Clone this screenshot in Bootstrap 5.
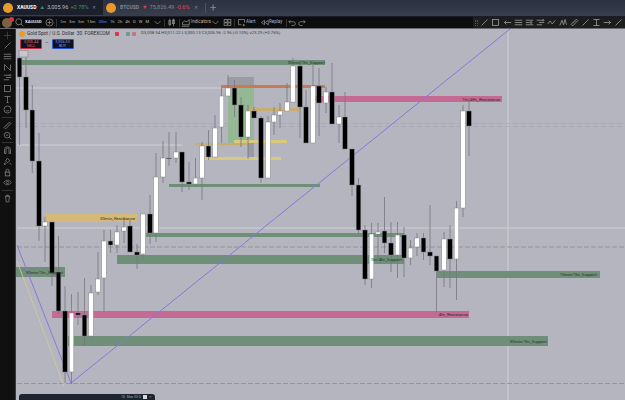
<!DOCTYPE html>
<html>
  <head>
    <title>XAUUSD chart</title>
    <link href="https://cdn.jsdelivr.net/npm/bootstrap@5.3.3/dist/css/bootstrap.min.css" rel="stylesheet">
    <style>
      html, body { height: 100%; overflow: hidden; }
      body { background: #b4b5bf; font-family: Roboto, "Liberation Sans", sans-serif; font-size: 4.500px; color: #b4b6bd; }
      .page { height: 400px; width: 625px; }
      .tabbar { height: 16px; background: linear-gradient(#2c3140, #383e4d); font-size: 5.600px; }
      .tab { height: 15px; padding-left: 3px; gap: 2px; white-space: nowrap; }
      .tab-first { width: 103px; }
      .tab-second { width: 102px; }
      .tab-on { background: #1c202c; }
      .tab-dim { opacity: .6; }
      .tab-name { margin: 0 1px; font-size: 5px; }
      .tab-close { font-size: 5px; margin-right: 7px; }
      .tab-sep { width: 1px; height: 10px; background: #4c5261; margin-top: 3px; }
      .tab-plus { font-size: 11px; line-height: 15px; margin-left: 4px; }
      .coin { width: 10px; height: 10px; border-radius: 50%; background: #e89a2b; flex: none; margin-right: 1px; }
      .coin-sm { width: 6px; height: 6px; margin: 0; }
      .up { color: #3f8f6a; }
      .down { color: #e0434f; }
      .toolbar { height: 13px; background: #0d0d0d; border-top: 1px solid #1a1d29; border-bottom: 1px solid #6a6b70; }
      .tool-main { padding-left: 2px; }
      .sl-1 { margin-left: 1px; }
      .sl-2 { margin-left: 2px; }
      .sl-3 { margin-left: 3px; }
      .sl-4 { margin-left: 4px; }
      .avatar { width: 10px; height: 10px; border-radius: 50%; background: #7d6240; position: relative; flex: none; }
      .avatar-dot { position: absolute; top: -1px; right: -2px; width: 5px; height: 5px; border-radius: 50%; background: #d9363e; }
      .search-box { width: 26px; gap: 1px; font-size: 4.300px; font-weight: 500; }
      .search-glass { width: 5px; height: 5px; stroke: #c9c9c9; }
      .vsep { width: 1px; height: 8px; background: #333; flex: none; }
      .tf-group { width: 92px; gap: 3px; font-size: 4.200px; white-space: nowrap; }
      .tf-on { color: #3a5fd0; font-weight: 700; }
      .chev { width: 4px; height: 4px; stroke: #8a8a8a; }
      .ind-text { width: 19px; white-space: nowrap; }
      .alert-text { width: 11px; }
      .replay-text { width: 14px; }
      .draw-tools { width: 152px; height: 11px; background: #1d1d1d; gap: 2.200px; padding-left: 1px; }
      .grip { width: 3px; height: 6px; margin-left: 1px; border-left: 1px dotted #555; border-right: 1px dotted #555; flex: none; }
      .ico { width: 9px; height: 9px; fill: none; stroke: #909090; stroke-width: 1; flex: none; }
      .draw-tools .ico { stroke: #a6a6a6; }
      .side { width: 16px; background: #101010; border-right: 1px solid #3a3a3e; padding-top: 1.500px; }
      .side .ico { margin-bottom: 1.700px; stroke: #868686; }
      .side .ico-cross { stroke: #34466f; }
      .side-sep { width: 11px; height: 1px; background: #333; margin: .5px 0 3px; flex: none; }
      .canvas { position: relative; width: 609px; height: 371px; }
      .canvas svg.plot { position: absolute; inset: 0; }
      .legend { position: absolute; left: 3px; top: 1px; color: #2c2d33; font-size: 4.800px; gap: 2px; white-space: nowrap; }
      .legend-red { margin: 0 5px 0 3px; }
      .legend-vals { color: #3d3e45; font-size: 4.300px; margin-left: 3px; }
      .mini-dot { width: 4px; height: 4px; border-radius: 1px; flex: none; }
      .order-row { position: absolute; left: 4px; top: 9.500px; gap: 3px; color: #55565c; }
      .order { width: 22px; height: 10px; border-radius: 1px; background: #10131c; font-size: 3.800px; line-height: 4px; text-align: center; padding-top: .5px; }
      .order-sell { border: 1px solid #c2304a; color: #e0606f; }
      .order-buy { border: 1px solid #2b55c9; color: #7a9bf0; }
      .bottom-panel { position: absolute; left: 3px; bottom: 0; width: 136px; height: 6px; background: #1e2330; border-radius: 3px 3px 0 0; font-size: 3.400px; color: #9ea3b0; padding: .5px 3px; line-height: 4px; }
      .panel-box { width: 4px; height: 4px; background: #d7d8dc; margin-left: 2px; }
      .panel-x { margin-left: 2px; }
    </style>
  </head>
  <body>
    <svg width="0" height="0" class="position-absolute">
      <symbol id="i-cross" viewBox="0 0 12 12"><path d="M6 1v10M1 6h10"/><circle cx="6" cy="6" r="1"/></symbol>
      <symbol id="i-line" viewBox="0 0 12 12"><path d="M2 10 10 2"/></symbol>
      <symbol id="i-lines" viewBox="0 0 12 12"><path d="M1 3h10M1 6h10M1 9h10"/></symbol>
      <symbol id="i-xabcd" viewBox="0 0 12 12"><path d="M2 10V2l8 8V2"/></symbol>
      <symbol id="i-gann" viewBox="0 0 12 12"><path d="M1 3h7M4 6h7M1 9h7"/><circle cx="9.500" cy="3" r="1"/></symbol>
      <symbol id="i-rect" viewBox="0 0 12 12"><rect x="2" y="2" width="8" height="8"/></symbol>
      <symbol id="i-text" viewBox="0 0 12 12"><path d="M2 2h8M6 2v8M4.500 10h3"/></symbol>
      <symbol id="i-smile" viewBox="0 0 12 12"><circle cx="6" cy="6" r="4.700"/><path d="M4 7.200c1 1 3 1 4 0"/></symbol>
      <symbol id="i-ruler" viewBox="0 0 12 12"><path d="M1.500 8.500 8.500 1.500l2 2-7 7zM4 6l1 1M6 4l1 1"/></symbol>
      <symbol id="i-zoom" viewBox="0 0 12 12"><circle cx="5.500" cy="5.500" r="3.800"/><path d="m8.500 8.500 2.500 2.500M4 5.500h3"/></symbol>
      <symbol id="i-magnet" viewBox="0 0 12 12"><path d="M2 10V5a4 4 0 0 1 8 0v5H8V5a2 2 0 0 0-4 0v5z"/></symbol>
      <symbol id="i-pencil" viewBox="0 0 12 12"><path d="M6 1.500 9 5 6 7.500 3.500 5zM3 7l-1.500 3 3-1M9 8l1.500 2"/></symbol>
      <symbol id="i-lock" viewBox="0 0 12 12"><rect x="3" y="5.500" width="6" height="5"/><path d="M4 5.500V3.500a2 2 0 0 1 4 0v2"/></symbol>
      <symbol id="i-eye" viewBox="0 0 12 12"><path d="M1 6c2-4 8-4 10 0-2 4-8 4-10 0z"/><circle cx="6" cy="6" r="1.500"/></symbol>
      <symbol id="i-trash" viewBox="0 0 12 12"><path d="M2.500 3h7M3.500 3l.8 7.500h3.400L8.500 3M5 3V1.500h2V3"/></symbol>
      <symbol id="i-plus" viewBox="0 0 12 12"><circle cx="6" cy="6" r="4.700"/><path d="M6 3.500v5M3.500 6h5"/></symbol>
      <symbol id="i-candle" viewBox="0 0 12 12"><rect x="2.500" y="3.500" width="2.500" height="5"/><rect x="7.500" y="2.500" width="2.500" height="5"/><path d="M3.700 1v10M8.700 1v10"/></symbol>
      <symbol id="i-ind" viewBox="0 0 12 12"><path d="M1 11h10M2 9V6l3-2 3 1 3-3v7z"/></symbol>
      <symbol id="i-grid" viewBox="0 0 12 12"><rect x="1.500" y="2" width="4" height="3.500"/><rect x="6.500" y="2" width="4" height="3.500"/><rect x="1.500" y="6.500" width="4" height="3.500"/><rect x="6.500" y="6.500" width="4" height="3.500"/></symbol>
      <symbol id="i-alert" viewBox="0 0 12 12"><path d="M10 6V2H2v7h4M9 8v3M7.500 9.500h3"/></symbol>
      <symbol id="i-replay" viewBox="0 0 12 12"><path d="M6 3 2 6l4 3zM11 3 7 6l4 3z"/></symbol>
      <symbol id="i-undo" viewBox="0 0 12 12"><path d="M2.500 5h6a2.500 2.500 0 0 1 0 5H6M4.500 3l-2 2 2 2"/></symbol>
      <symbol id="i-redo" viewBox="0 0 12 12"><path d="M9.500 5h-6a2.500 2.500 0 0 0 0 5H6M7.500 3l2 2-2 2"/></symbol>
      <symbol id="i-arrow" viewBox="0 0 12 12"><path d="M11 6H2M4.500 3.500 2 6l2.500 2.500"/></symbol>
      <symbol id="i-arrow-r" viewBox="0 0 12 12"><path d="M1 6h9M7.500 3.500 10 6 7.500 8.500"/></symbol>
      <symbol id="i-channel" viewBox="0 0 12 12"><path d="M1 3h10M1 9h10M1 6h5"/><circle cx="8" cy="6" r="1.200"/></symbol>
      <symbol id="i-wave" viewBox="0 0 12 12"><path d="M1 8 4 4l3 4 4-5"/></symbol>
      <symbol id="i-wave2" viewBox="0 0 12 12"><path d="M1 10 4 3l2 6 2-7 2 7"/></symbol>
      <symbol id="i-ibeam" viewBox="0 0 12 12"><path d="M2 2h8M2 10h8M6 2v8"/></symbol>
      <symbol id="i-chev" viewBox="0 0 12 12"><path d="m2 4 4 4 4-4"/></symbol>
      <symbol id="i-glass" viewBox="0 0 12 12"><circle cx="5" cy="5" r="4"/><path d="m8 8 3 3"/></symbol>
    </svg>

    <div class="page d-flex flex-column">
      <div class="tabbar d-flex align-items-start flex-shrink-0">
        <div class="tab tab-first tab-on d-flex align-items-center">
          <span class="coin"></span>
          <span class="fw-bold tab-name text-white">XAUUSD</span>
          <span class="up">▲</span><span>3,005.96</span><span class="up">+0.78%</span>
          <span class="ms-auto tab-close tab-dim">✕</span>
        </div>
        <div class="tab tab-second d-flex align-items-center">
          <span class="coin"></span>
          <span class="fw-bold tab-name tab-dim">BTCUSD</span>
          <span class="down">▼</span><span class="tab-dim">75,826.49</span><span class="down">-0.6%</span>
          <span class="ms-auto tab-close tab-dim">✕</span>
        </div>
        <span class="tab-sep"></span>
        <span class="tab-plus tab-dim">+</span>
      </div>

      <div class="toolbar d-flex align-items-center flex-shrink-0">
        <div class="tool-main d-flex align-items-center flex-grow-1">
          <span class="avatar"><span class="avatar-dot"></span></span>
          <span class="search-box sl-3 d-flex align-items-center text-white">
            <svg class="ico search-glass"><use href="#i-glass"/></svg>XAUUSD
          </span>
          <svg class="ico sl-4"><use href="#i-plus"/></svg>
          <span class="vsep sl-2"></span>
          <div class="tf-group sl-3 d-flex align-items-center">
            <span>1m</span><span>3m</span><span>5m</span><span>15m</span>
            <span class="tf-on">30m</span><span>1h</span><span>2h</span><span>4h</span>
            <span>D</span><span>W</span><span>M</span>
          </div>
          <svg class="ico chev sl-1"><use href="#i-chev"/></svg>
          <span class="vsep sl-2"></span>
          <svg class="ico sl-2"><use href="#i-candle"/></svg>
          <span class="vsep sl-3"></span>
          <svg class="ico sl-1"><use href="#i-ind"/></svg>
          <span class="ind-text sl-1">Indicators</span>
          <svg class="ico chev sl-1"><use href="#i-chev"/></svg>
          <svg class="ico sl-3"><use href="#i-grid"/></svg>
          <span class="vsep sl-2"></span>
          <svg class="ico sl-2"><use href="#i-alert"/></svg>
          <span class="alert-text">Alert</span>
          <svg class="ico sl-3"><use href="#i-replay"/></svg>
          <span class="replay-text">Replay</span>
          <span class="vsep sl-3"></span>
          <svg class="ico"><use href="#i-undo"/></svg>
          <svg class="ico sl-2"><use href="#i-redo"/></svg>
        </div>
        <div class="draw-tools d-flex align-items-center flex-shrink-0">
          <span class="grip"></span>
          <svg class="ico"><use href="#i-line"/></svg>
          <svg class="ico"><use href="#i-rect"/></svg>
          <svg class="ico"><use href="#i-arrow"/></svg>
          <svg class="ico"><use href="#i-lines"/></svg>
          <svg class="ico"><use href="#i-channel"/></svg>
          <svg class="ico"><use href="#i-gann"/></svg>
          <svg class="ico"><use href="#i-wave"/></svg>
          <svg class="ico"><use href="#i-wave2"/></svg>
          <svg class="ico"><use href="#i-ruler"/></svg>
          <svg class="ico"><use href="#i-line"/></svg>
          <svg class="ico"><use href="#i-ibeam"/></svg>
          <svg class="ico"><use href="#i-arrow-r"/></svg>
          <svg class="ico"><use href="#i-line"/></svg>
        </div>
      </div>

      <div class="d-flex flex-grow-1">
        <div class="side d-flex flex-column align-items-center flex-shrink-0">
          <svg class="ico ico-cross"><use href="#i-cross"/></svg>
          <svg class="ico"><use href="#i-line"/></svg>
          <svg class="ico"><use href="#i-lines"/></svg>
          <svg class="ico"><use href="#i-xabcd"/></svg>
          <svg class="ico"><use href="#i-gann"/></svg>
          <svg class="ico"><use href="#i-rect"/></svg>
          <svg class="ico"><use href="#i-text"/></svg>
          <svg class="ico"><use href="#i-smile"/></svg>
          <span class="side-sep"></span>
          <svg class="ico"><use href="#i-ruler"/></svg>
          <svg class="ico"><use href="#i-zoom"/></svg>
          <span class="side-sep"></span>
          <svg class="ico"><use href="#i-magnet"/></svg>
          <svg class="ico"><use href="#i-pencil"/></svg>
          <svg class="ico"><use href="#i-lock"/></svg>
          <svg class="ico"><use href="#i-eye"/></svg>
          <span class="side-sep"></span>
          <svg class="ico"><use href="#i-trash"/></svg>
        </div>

        <div class="canvas flex-shrink-0">
          <svg class="plot" id="plot" width="609" height="371" viewBox="16 29 609 371"></svg>

          <div class="legend d-flex align-items-center">
            <span class="coin coin-sm"></span>
            <span>Gold Spot / U.S. Dollar &nbsp;30&nbsp; FOREXCOM</span>
            <span class="mini-dot legend-red bg-danger"></span>
            <span class="mini-dot bg-success opacity-50"></span>
            <span class="mini-dot bg-danger opacity-50"></span>
            <span class="legend-vals">O3,008.94 H3,011.22 L3,000.13 C3,005.96 -2.96 (-0.10%) v23.29 (+0.76%)</span>
          </div>
          <div class="order-row d-flex align-items-center">
            <div class="order order-sell">3,005.44<br>SELL</div>
            <span>—</span>
            <div class="order order-buy">3,006.53<br>BUY</div>
          </div>
          <div class="bottom-panel d-flex align-items-start">
            <span class="ms-auto">1D&nbsp;&nbsp;Max 30 D</span>
            <span class="panel-box"></span>
            <span class="panel-x">✕</span>
          </div>
        </div>
      </div>
    </div>

    <script>
      // x, wick top, body top, body bottom, wick bottom, colour
      const candles = [
        [19.5,52,58,77,145,"b"],[26,57,77,110,128,"b"],[32.3,85,110,161,173,"b"],[39,133,161,226,241,"b"],
        [45,217,222,226,262,"w"],[52,222,222,273,286,"b"],[58.5,236,272,311,314,"b"],[65,286,311,372,383,"b"],
        [71.5,294,313,372,384,"w"],[78,292,313,315,325,"b"],[84.5,278,315,336,346,"b"],[91,285,293,336,338,"w"],
        [98,252,279,292,295,"w"],[104,230,241,278,312,"w"],[110.5,230,241,245,253,"b"],[117,225,232,245,253,"w"],
        [124,217,227,231,243,"w"],[130,220,226,252,252,"b"],[137,244,252,255,269,"b"],[143,214,214,254,259,"w"],
        [150,195,214,233,244,"b"],[156,153,177,233,242,"w"],[163,141,158,177,183,"w"],[169,132,158,158.8,166,"b"],
        [176,132,152,158,163,"w"],[182,152,152,182,192,"b"],[189,162,182,184,190,"b"],[195.5,158,178,184,187,"w"],
        [202,142,146,178,200,"w"],[208.5,130,146,157,160,"b"],[215,115,128,157,157,"w"],[221.5,88,96,127,143,"w"],
        [228,75,88,96,96,"w"],[234.5,80,88,105,117,"b"],[241,97,105,137,147,"b"],[248,105,111,137,159,"w"],
        [254,107,111,118,118,"b"],[261,116,118,178,183,"b"],[268,116,122,178,178,"w"],[274,107,115,122,135,"w"],
        [280,103,111,115,128,"w"],[287,83,102,111,111,"w"],[293,58,66,102,102,"w"],[300,60,66,107,138,"b"],
        [306,90,107,143,143,"b"],[313,60,86,143,143,"w"],[319,68,86,103,136,"b"],[326,87,92,103,113,"w"],
        [332,63,92,124,124,"b"],[339,105,117,124,143,"w"],[345,92,117,149,149,"b"],[352,149,149,185,196,"b"],
        [358.5,178,185,230,233,"b"],[365,225,230,279,285,"b"],[371.5,223,234,279,288,"w"],[378,223,232,234,258,"w"],
        [384.5,197,231,243,253,"b"],[391,222,243,255,272,"b"],[397.5,222,235,255,278,"w"],[404,227,235,258,277,"b"],
        [410.5,240,248,258,265,"w"],[417,233,238,247,256,"w"],[423.5,233,238,252,260,"b"],[430,205,252,256,265,"b"],
        [436.5,256,256,271,312,"b"],[444,232,239,270,287,"w"],[450,225,239,259,288,"b"],[456.5,201,208,259,300,"w"],
        [463,105,111,208,217,"w"],[469,100,111,126,156,"b"]
      ];
      // x1, x2, y1, y2, colour
      const zones = [
        [228,254,77,88,"#9b9ba4"],[228,254,88,143,"#94b794"],[248,254,143,160,"#9a9aa3"],
        [17,325,60,65,"#6f8f78"],[315,502,96,102,"#c46a94"],[221,325,85,88,"#c87b52"],
        [234,287,140,143,"#d8c97c"],[205,281,157,160,"#d8c97c"],[195,247,143,145,"#c9ae74"],[248,299,108,111,"#c9ae74"],
        [169,320,184,187,"#6f8f78"],[45,137,214,222,"#d6b878"],[146,404,233,237,"#6f8f78"],[117,404,255,264,"#6f8f78"],
        [16,65,267,277,"#6f8f78"],[52,469,311,318,"#c46a94"],[68,548,336,346,"#6f8f78"],[437,600,271,278,"#6f8f78"]
      ];
      const labels = [
        [325,63.8,"30min/1hr_Support"],[500,100.6,"1hr/4Hr_Resistance"],[135,219.6,"30min_Resistance"],
        [402,260.8,"1hr/4hr_Support"],[63,273.5,"30min/1hr_Support"],[468,316,"4hr_Resistance"],
        [547,342.6,"30min/1hr_Support"],[597,276,"15min/1hr_Support"]
      ];

      let out = "";
      // plain horizontal and vertical guides
      out += '<path d="M17 88H240M17 145H182M17 228H625M508 29V400" stroke="#cfd0d6" stroke-width="1" fill="none"/>';
      out += '<path d="M17 123.500H625" stroke="#b79ca6" stroke-width=".6" stroke-dasharray="5 3"/>';
      out += '<path d="M17 126.500H625" stroke="#9aa4b8" stroke-width=".6" stroke-dasharray="5 3"/>';
      out += '<path d="M17 247H625M17 383.500H625" stroke="#85868e" stroke-width=".7" stroke-dasharray="5 2"/>';

      for (const [x1, x2, y1, y2, c] of zones) {
        out += `<rect x="${x1}" y="${y1}" width="${x2 - x1}" height="${y2 - y1}" fill="${c}"/>`;
      }

      out += '<path d="M17 245 71 383 510 29" stroke="#8678dc" stroke-width="1" fill="none"/>';
      out += '<path d="M17 261 64 386" stroke="#d5cd92" stroke-width=".8" fill="none"/>';

      for (const [x, wt, bt, bb, wb, c] of candles) {
        out += `<path d="M${x} ${wt}V${wb}" stroke="#75767d" stroke-width=".8"/>`;
        const fill = c === "w" ? "#fff" : "#000";
        out += `<rect x="${x - 2.3}" y="${bt}" width="4.6" height="${bb - bt}" fill="${fill}" stroke="#85868c" stroke-width=".5"/>`;
      }

      for (const [x, y, t] of labels) {
        out += `<text x="${x}" y="${y}" text-anchor="end" font-size="4.300" font-family="Roboto, sans-serif" fill="#26332b">${t}</text>`;
      }

      // small price tag at the top of the first candle
      out += '<rect x="19" y="50.500" width="9" height="6.500" fill="#c6c7ce" stroke="#85868c" stroke-width=".6"/>';

      document.getElementById("plot").innerHTML = out;
    </script>
    <script src="https://cdn.jsdelivr.net/npm/bootstrap@5.3.3/dist/js/bootstrap.bundle.min.js"></script>
  </body>
</html>
